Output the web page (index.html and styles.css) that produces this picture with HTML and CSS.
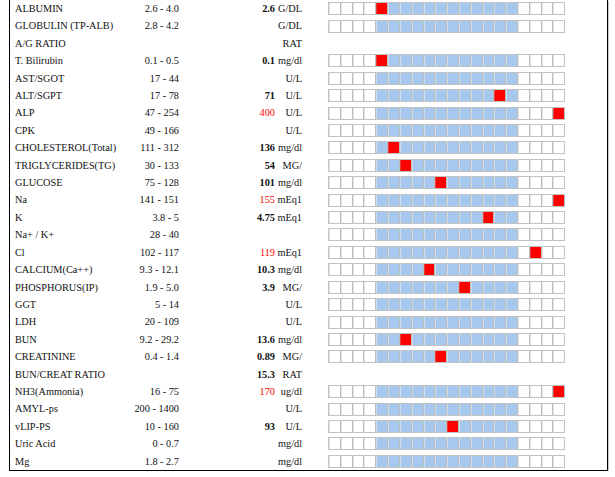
FILE: index.html
```html
<!DOCTYPE html>
<html>
<head>
<meta charset="utf-8">
<link rel="stylesheet" href="styles.css">
</head>
<body>
<div class="frame">
  <div class="row"><span class="nm">ALBUMIN</span><span class="rg">2.6 - 4.0</span><span class="vl">2.6</span><span class="un">G/DL</span><div class="bar"><i></i><i></i><i></i><i></i><i class="r"></i><i></i><i></i><i></i><i></i><i></i><i></i><i></i><i></i><i></i><i></i><i></i><i></i><i></i><i></i><i></i></div></div>
  <div class="row"><span class="nm">GLOBULIN (TP-ALB)</span><span class="rg">2.8 - 4.2</span><span class="vl"></span><span class="un">G/DL</span><div class="bar"><i></i><i></i><i></i><i></i><i></i><i></i><i></i><i></i><i></i><i></i><i></i><i></i><i></i><i></i><i></i><i></i><i></i><i></i><i></i><i></i></div></div>
  <div class="row"><span class="nm">A/G RATIO</span><span class="rg"></span><span class="vl"></span><span class="un">RAT</span></div>
  <div class="row"><span class="nm">T. Bilirubin</span><span class="rg">0.1 - 0.5</span><span class="vl">0.1</span><span class="un">mg/dl</span><div class="bar"><i></i><i></i><i></i><i></i><i class="r"></i><i></i><i></i><i></i><i></i><i></i><i></i><i></i><i></i><i></i><i></i><i></i><i></i><i></i><i></i><i></i></div></div>
  <div class="row"><span class="nm">AST/SGOT</span><span class="rg">17 - 44</span><span class="vl"></span><span class="un">U/L</span><div class="bar"><i></i><i></i><i></i><i></i><i></i><i></i><i></i><i></i><i></i><i></i><i></i><i></i><i></i><i></i><i></i><i></i><i></i><i></i><i></i><i></i></div></div>
  <div class="row"><span class="nm">ALT/SGPT</span><span class="rg">17 - 78</span><span class="vl">71</span><span class="un">U/L</span><div class="bar"><i></i><i></i><i></i><i></i><i></i><i></i><i></i><i></i><i></i><i></i><i></i><i></i><i></i><i></i><i class="r"></i><i></i><i></i><i></i><i></i><i></i></div></div>
  <div class="row"><span class="nm">ALP</span><span class="rg">47 - 254</span><span class="vl hi">400</span><span class="un">U/L</span><div class="bar"><i></i><i></i><i></i><i></i><i></i><i></i><i></i><i></i><i></i><i></i><i></i><i></i><i></i><i></i><i></i><i></i><i></i><i></i><i></i><i class="r"></i></div></div>
  <div class="row"><span class="nm">CPK</span><span class="rg">49 - 166</span><span class="vl"></span><span class="un">U/L</span><div class="bar"><i></i><i></i><i></i><i></i><i></i><i></i><i></i><i></i><i></i><i></i><i></i><i></i><i></i><i></i><i></i><i></i><i></i><i></i><i></i><i></i></div></div>
  <div class="row"><span class="nm">CHOLESTEROL(Total)</span><span class="rg">111 - 312</span><span class="vl">136</span><span class="un">mg/dl</span><div class="bar"><i></i><i></i><i></i><i></i><i></i><i class="r"></i><i></i><i></i><i></i><i></i><i></i><i></i><i></i><i></i><i></i><i></i><i></i><i></i><i></i><i></i></div></div>
  <div class="row"><span class="nm">TRIGLYCERIDES(TG)</span><span class="rg">30 - 133</span><span class="vl">54</span><span class="un">MG/</span><div class="bar"><i></i><i></i><i></i><i></i><i></i><i></i><i class="r"></i><i></i><i></i><i></i><i></i><i></i><i></i><i></i><i></i><i></i><i></i><i></i><i></i><i></i></div></div>
  <div class="row"><span class="nm">GLUCOSE</span><span class="rg">75 - 128</span><span class="vl">101</span><span class="un">mg/dl</span><div class="bar"><i></i><i></i><i></i><i></i><i></i><i></i><i></i><i></i><i></i><i class="r"></i><i></i><i></i><i></i><i></i><i></i><i></i><i></i><i></i><i></i><i></i></div></div>
  <div class="row"><span class="nm">Na</span><span class="rg">141 - 151</span><span class="vl hi">155</span><span class="un">mEq1</span><div class="bar"><i></i><i></i><i></i><i></i><i></i><i></i><i></i><i></i><i></i><i></i><i></i><i></i><i></i><i></i><i></i><i></i><i></i><i></i><i></i><i class="r"></i></div></div>
  <div class="row"><span class="nm">K</span><span class="rg">3.8 - 5</span><span class="vl">4.75</span><span class="un">mEq1</span><div class="bar"><i></i><i></i><i></i><i></i><i></i><i></i><i></i><i></i><i></i><i></i><i></i><i></i><i></i><i class="r"></i><i></i><i></i><i></i><i></i><i></i><i></i></div></div>
  <div class="row"><span class="nm">Na+ / K+</span><span class="rg">28 - 40</span><span class="vl"></span><span class="un"></span><div class="bar"><i></i><i></i><i></i><i></i><i></i><i></i><i></i><i></i><i></i><i></i><i></i><i></i><i></i><i></i><i></i><i></i><i></i><i></i><i></i><i></i></div></div>
  <div class="row"><span class="nm">Cl</span><span class="rg">102 - 117</span><span class="vl hi">119</span><span class="un">mEq1</span><div class="bar"><i></i><i></i><i></i><i></i><i></i><i></i><i></i><i></i><i></i><i></i><i></i><i></i><i></i><i></i><i></i><i></i><i></i><i class="r"></i><i></i><i></i></div></div>
  <div class="row"><span class="nm">CALCIUM(Ca++)</span><span class="rg">9.3 - 12.1</span><span class="vl">10.3</span><span class="un">mg/dl</span><div class="bar"><i></i><i></i><i></i><i></i><i></i><i></i><i></i><i></i><i class="r"></i><i></i><i></i><i></i><i></i><i></i><i></i><i></i><i></i><i></i><i></i><i></i></div></div>
  <div class="row"><span class="nm">PHOSPHORUS(IP)</span><span class="rg">1.9 - 5.0</span><span class="vl">3.9</span><span class="un">MG/</span><div class="bar"><i></i><i></i><i></i><i></i><i></i><i></i><i></i><i></i><i></i><i></i><i></i><i class="r"></i><i></i><i></i><i></i><i></i><i></i><i></i><i></i><i></i></div></div>
  <div class="row"><span class="nm">GGT</span><span class="rg">5 - 14</span><span class="vl"></span><span class="un">U/L</span><div class="bar"><i></i><i></i><i></i><i></i><i></i><i></i><i></i><i></i><i></i><i></i><i></i><i></i><i></i><i></i><i></i><i></i><i></i><i></i><i></i><i></i></div></div>
  <div class="row"><span class="nm">LDH</span><span class="rg">20 - 109</span><span class="vl"></span><span class="un">U/L</span><div class="bar"><i></i><i></i><i></i><i></i><i></i><i></i><i></i><i></i><i></i><i></i><i></i><i></i><i></i><i></i><i></i><i></i><i></i><i></i><i></i><i></i></div></div>
  <div class="row"><span class="nm">BUN</span><span class="rg">9.2 - 29.2</span><span class="vl">13.6</span><span class="un">mg/dl</span><div class="bar"><i></i><i></i><i></i><i></i><i></i><i></i><i class="r"></i><i></i><i></i><i></i><i></i><i></i><i></i><i></i><i></i><i></i><i></i><i></i><i></i><i></i></div></div>
  <div class="row"><span class="nm">CREATININE</span><span class="rg">0.4 - 1.4</span><span class="vl">0.89</span><span class="un">MG/</span><div class="bar"><i></i><i></i><i></i><i></i><i></i><i></i><i></i><i></i><i></i><i class="r"></i><i></i><i></i><i></i><i></i><i></i><i></i><i></i><i></i><i></i><i></i></div></div>
  <div class="row"><span class="nm">BUN/CREAT RATIO</span><span class="rg"></span><span class="vl">15.3</span><span class="un">RAT</span></div>
  <div class="row"><span class="nm">NH3(Ammonia)</span><span class="rg">16 - 75</span><span class="vl hi">170</span><span class="un">ug/dl</span><div class="bar"><i></i><i></i><i></i><i></i><i></i><i></i><i></i><i></i><i></i><i></i><i></i><i></i><i></i><i></i><i></i><i></i><i></i><i></i><i></i><i class="r"></i></div></div>
  <div class="row"><span class="nm">AMYL-ps</span><span class="rg">200 - 1400</span><span class="vl"></span><span class="un">U/L</span><div class="bar"><i></i><i></i><i></i><i></i><i></i><i></i><i></i><i></i><i></i><i></i><i></i><i></i><i></i><i></i><i></i><i></i><i></i><i></i><i></i><i></i></div></div>
  <div class="row"><span class="nm">vLIP-PS</span><span class="rg">10 - 160</span><span class="vl">93</span><span class="un">U/L</span><div class="bar"><i></i><i></i><i></i><i></i><i></i><i></i><i></i><i></i><i></i><i></i><i class="r"></i><i></i><i></i><i></i><i></i><i></i><i></i><i></i><i></i><i></i></div></div>
  <div class="row"><span class="nm">Uric Acid</span><span class="rg">0 - 0.7</span><span class="vl"></span><span class="un">mg/dl</span><div class="bar"><i></i><i></i><i></i><i></i><i></i><i></i><i></i><i></i><i></i><i></i><i></i><i></i><i></i><i></i><i></i><i></i><i></i><i></i><i></i><i></i></div></div>
  <div class="row"><span class="nm">Mg</span><span class="rg">1.8 - 2.7</span><span class="vl"></span><span class="un">mg/dl</span><div class="bar"><i></i><i></i><i></i><i></i><i></i><i></i><i></i><i></i><i></i><i></i><i></i><i></i><i></i><i></i><i></i><i></i><i></i><i></i><i></i><i></i></div></div>
</div>
</body>
</html>
```
FILE: styles.css
```css
html, body {
  margin: 0;
  padding: 0;
  background: #ffffff;
}

body {
  font-family: "Liberation Serif", "Times New Roman", serif;
  font-size: 10.3px;
  color: #111111;
}

.frame {
  margin-left: 9px;
  width: 599px;
  box-sizing: border-box;
  border-left: 1px solid #000000;
  border-right: 1px solid #000000;
  border-bottom: 1px solid #000000;
  box-shadow: 1px 1px 0 #c8c8c8;
}

.row {
  display: grid;
  grid-template-columns: 110px 54px 96px 27px auto;
  align-items: center;
  height: 17.41px;
  line-height: 17.41px;
  padding-left: 5px;
  white-space: nowrap;
}

.rg, .vl, .un {
  text-align: right;
}

.vl {
  font-weight: bold;
}

.vl.hi {
  font-weight: normal;
  color: #ff0000;
}

.bar {
  margin-left: 26px;
  width: 237.4px;
  height: 13px;
  box-sizing: border-box;
  display: flex;
  border: 1px solid #c2c2c2;
  background: #eeeeee;
}

.bar > i {
  flex: 1;
  background: #ffffff;
  border-right: 1px solid #bcbcbc;
  box-shadow: inset 1px 0 0 #e4e4e4;
}

.bar > i:last-child {
  border-right: none;
}

.bar > i:nth-child(n+5):nth-child(-n+16) {
  background: #a7c8ee;
  box-shadow: inset 1px 0 0 #cfdcea;
}

.bar > i.r:nth-child(n) {
  background: #ff0000;
  box-shadow: inset 1px 0 0 #e04040;
}
```
